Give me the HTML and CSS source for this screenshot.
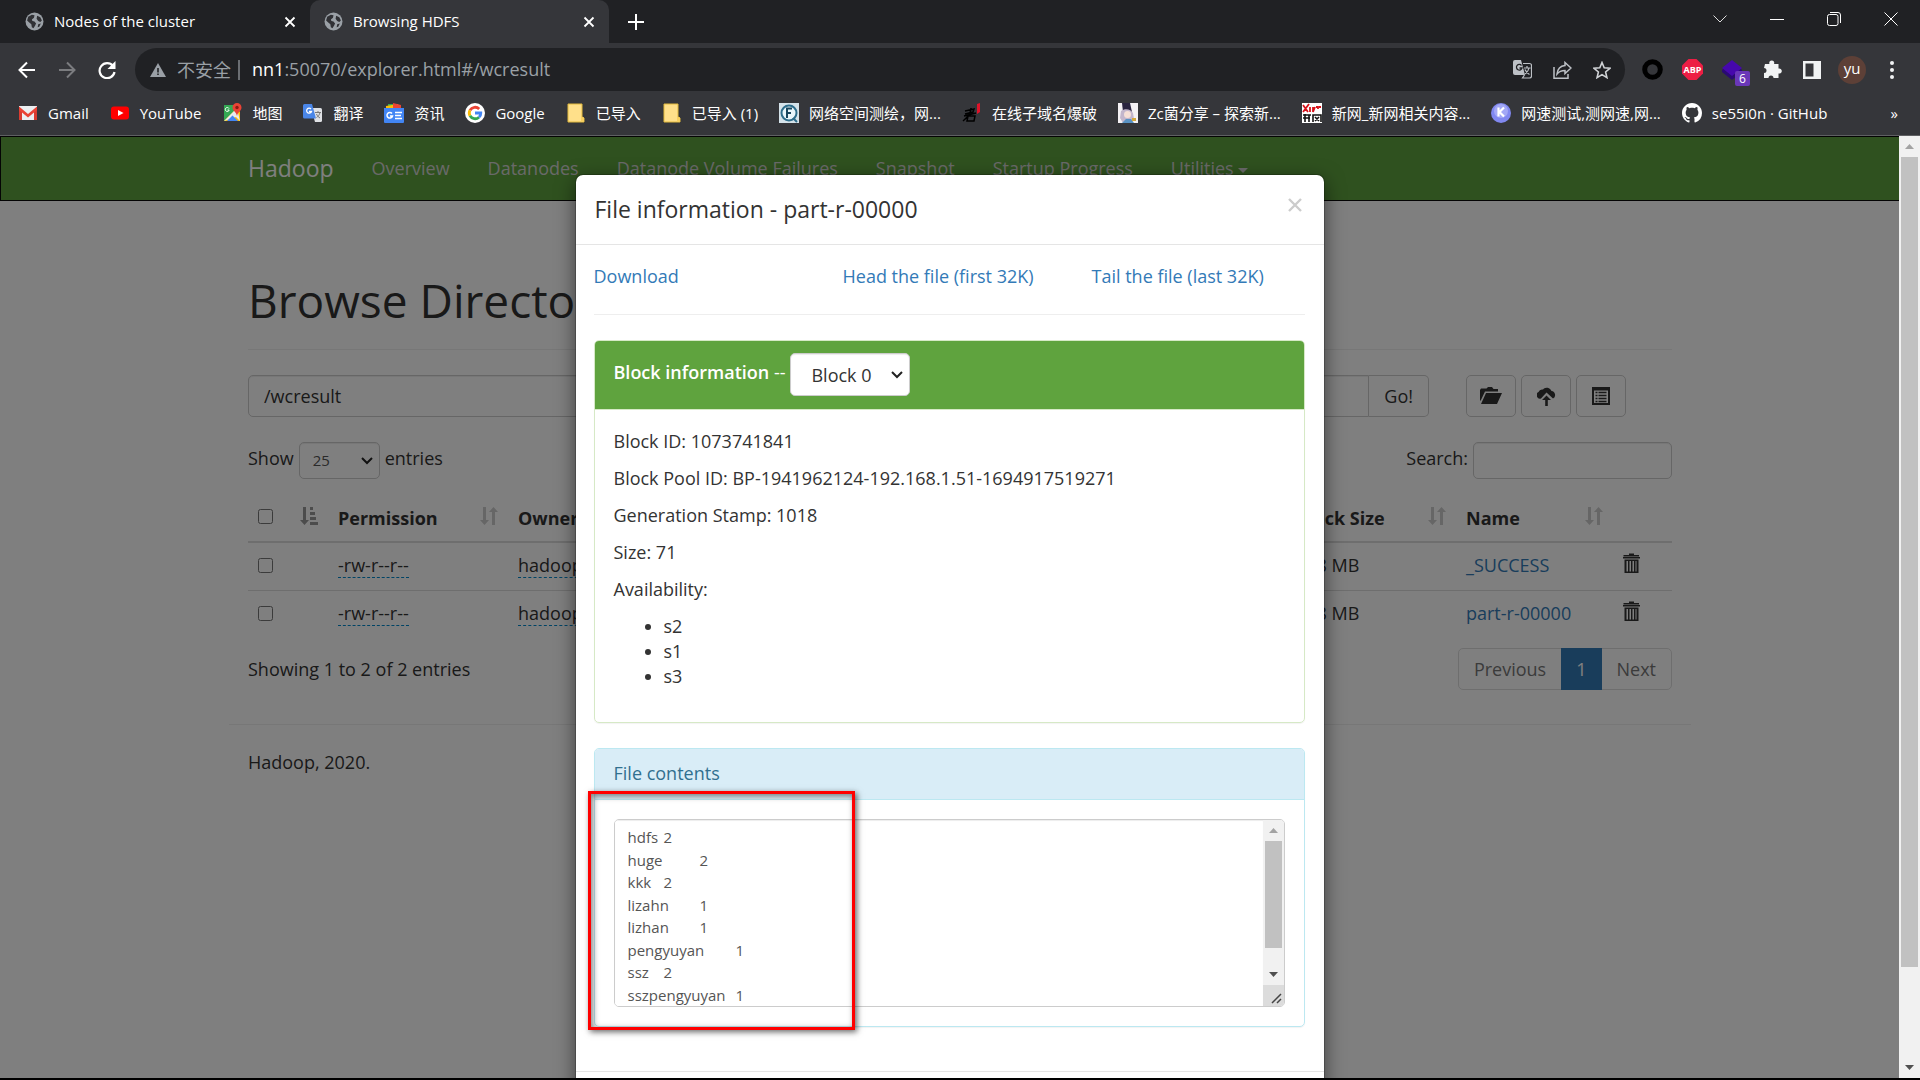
FILE: index.html
```html
<!DOCTYPE html>
<html lang="zh-CN">
<head>
    <meta charset="utf-8">
    <title>Browsing HDFS</title>
    <link rel="stylesheet" href="styles.css">
</head>
<body>
    <!-- shared icons -->
    <svg class="defs" aria-hidden="true">
        <symbol id="globe" viewBox="0 0 18 18">
            <circle cx="9" cy="9" r="8.5" fill="#9aa0a6"/>
            <path d="M3 4.500l3.500-2 2.500.5-.5 2.500-2 1.500.5 1.500 2 .5 1.500 2-1 2-1.500 2.500-1.500-1-.5-3-2.500-2-1.500-1.500zM11.500 3.500l3 1.500 1.500 3-1.500 1.500-2-1-1.500-2zM12.500 11.500l2.500-.5-1.500 3-1.500.5z" fill="#303135"/>
        </symbol>
        <symbol id="close" viewBox="0 0 12 12">
            <path d="M1.500 1.500l9 9M10.500 1.500l-9 9" stroke="currentColor" stroke-width="1.800"/>
        </symbol>
        <symbol id="folder" viewBox="0 0 20 20">
            <path d="M2 1h14v13l2 1v4H2z" fill="#ffe08a" stroke="#e2b93d"/>
            <path d="M15 14v4.500h3V14.500z" fill="#f7cf5e"/>
        </symbol>
        <symbol id="sort" viewBox="0 0 18 19">
            <path d="M3 0h3v13h3l-4.500 5L0 13h3zM12 18h3V5h3L13.500 0 9 5h3z" fill="currentColor"/>
        </symbol>
        <symbol id="sorted" viewBox="0 0 18 19">
            <path d="M3 0h3v13h3l-4.500 5L0 13h3zM10 0h3v3h-3zM10 5h5v3h-5zM10 10h6v3h-6zM10 15h8v3h-8z" fill="currentColor"/>
        </symbol>
        <symbol id="trash" viewBox="0 0 17 21">
            <path d="M6 2V.500h5V2h5v1.500H0.500V2zM0 4h17v1.500H0z" fill="currentColor"/>
            <path fill-rule="evenodd" d="M1.500 6.500h14V20h-14zM3.500 8v10.500h1.500V8zM6.500 8v10.500h1.500V8zM9.500 8v10.500h1.500V8zM12.500 8v10.500h1V8z" fill="currentColor"/>
        </symbol>
        <symbol id="arrow-up" viewBox="0 0 9 5"><path d="M0 5h9L4.500 0z" fill="#a3a3a3"/></symbol>
        <symbol id="arrow-down" viewBox="0 0 9 5"><path d="M0 0h9L4.500 5z" fill="#505050"/></symbol>
    </svg>

    <header class="browser">
        <div class="tabs">
            <div class="tab">
                <svg class="tab-icon"><use href="#globe"/></svg>
                <span class="tab-title">Nodes of the cluster</span>
                <button class="tab-close" aria-label="Close tab"><svg><use href="#close"/></svg></button>
            </div>
            <div class="tab active">
                <svg class="tab-icon"><use href="#globe"/></svg>
                <span class="tab-title">Browsing HDFS</span>
                <button class="tab-close" aria-label="Close tab"><svg><use href="#close"/></svg></button>
            </div>
            <button class="new-tab" aria-label="New tab"><svg width="16" height="16" viewBox="0 0 16 16"><path d="M8 0v16M0 8h16" stroke="#fff" stroke-width="2"/></svg></button>
            <div class="window-buttons">
                <button aria-label="Search tabs"><svg width="14" height="8" viewBox="0 0 14 8"><path d="M.500.500L7 7 13.500.500" fill="none" stroke="#ddd"/></svg></button>
                <button aria-label="Minimize"><svg width="14" height="1" viewBox="0 0 14 1"><path d="M0 0h14v1H0z" fill="#fff"/></svg></button>
                <button aria-label="Restore"><svg width="14" height="14" viewBox="0 0 14 14"><rect x=".5" y="2.500" width="10.500" height="11" rx="2" fill="none" stroke="#fff"/><path d="M3 .500h8a2.500 2.500 0 0 1 2.500 2.500v8" fill="none" stroke="#fff"/></svg></button>
                <button aria-label="Close"><svg width="14" height="14" viewBox="0 0 14 14"><path d="M.500.500l13 13M13.500.500l-13 13" stroke="#fff"/></svg></button>
            </div>
        </div>

        <div class="toolbar">
            <button class="tool" aria-label="Back"><svg width="18" height="18" viewBox="0 0 18 18"><path d="M17 9H2M9 1.500L1.500 9 9 16.500" fill="none" stroke="#fff" stroke-width="2"/></svg></button>
            <button class="tool" aria-label="Forward"><svg width="18" height="18" viewBox="0 0 18 18"><path d="M1 9h15M9 1.500L16.500 9 9 16.500" fill="none" stroke="#7b7c7f" stroke-width="2"/></svg></button>
            <button class="tool" aria-label="Reload"><svg width="18" height="18" viewBox="0 0 18 18"><path d="M15 5A7.500 7.500 0 1 0 16.500 11" fill="none" stroke="#fff" stroke-width="2.200"/><path d="M17.500 0v8h-8z" fill="#fff"/></svg></button>
            <div class="omnibox">
                <svg width="16" height="14" viewBox="0 0 16 14"><path d="M8 0l8 14H0z" fill="#9aa0a6"/><path d="M7.200 5h1.600v4.500H7.200zM7.200 10.500h1.600V12H7.200z" fill="#202124"/></svg>
                <span class="insecure">不安全</span>
                <span class="url"><b>nn1</b>:50070/explorer.html#/wcresult</span>
                <button class="tool" aria-label="Translate"><svg width="19" height="19" viewBox="0 0 19 19"><path d="M2 0h6l4 15H2a2 2 0 0 1-2-2V2a2 2 0 0 1 2-2z" fill="#bdc1c6"/><path d="M8.500 5.500A2.800 2.800 0 1 0 9 8H6.500" fill="none" stroke="#202124" stroke-width="1.300"/><path d="M10 3.500h6.500a2 2 0 0 1 2 2V16a2 2 0 0 1-2 2H9.500l2-3M11 8h6.500M14 6v2M16 8c-.5 3-2 4.500-4 6M12 9.500c1 2.500 2.500 4 4.500 5" fill="none" stroke="#bdc1c6" stroke-width="1.200"/></svg></button>
                <button class="tool" aria-label="Share"><svg width="19" height="18" viewBox="0 0 19 18"><path d="M1 6v11.200h14V13" fill="none" stroke="#bdc1c6" stroke-width="1.500"/><path d="M12 1.500L18 7l-6 5.500V9.500c-4 0-6 1-8 3.500.5-4.500 3-8 8-8.500z" fill="none" stroke="#bdc1c6" stroke-width="1.500"/></svg></button>
                <button class="tool" aria-label="Bookmark"><svg width="18" height="18" viewBox="0 0 18 18"><path d="M9 1.500l2.200 5.300 5.700.5-4.300 3.700 1.300 5.600L9 13.600l-4.900 3 1.300-5.600L1.100 7.300l5.700-.5z" fill="none" stroke="#d0d3d6" stroke-width="1.600"/></svg></button>
            </div>
            <button class="tool" aria-label="Extension"><svg width="21" height="21" viewBox="0 0 21 21"><circle cx="10.500" cy="10.500" r="7.800" fill="none" stroke="#000" stroke-width="5"/></svg></button>
            <button class="tool" aria-label="Adblock"><svg width="21" height="21" viewBox="0 0 21 21"><path d="M6.500 0h8L21 6.500v8L14.500 21h-8L0 14.500v-8z" fill="#ed1e45"/><text x="10.500" y="14.200" text-anchor="middle" class="abp">ABP</text></svg></button>
            <button class="tool ext" aria-label="Wappalyzer"><svg width="20" height="20" viewBox="0 0 20 20"><path d="M0 10l10-9 10 9v2l-10 8L0 12z" fill="#2a0a73"/><path d="M10 0l10 8-10 8L0 8z" fill="#4608ad"/></svg><span class="ext-count">6</span></button>
            <button class="tool" aria-label="Extensions"><svg width="19" height="19" viewBox="0 0 19 19"><path d="M2 4h4.500a2.500 2.500 0 1 1 4.500 0h4.500v4.500a2.600 2.600 0 1 1 0 5V18h-5a2.500 2.500 0 0 0-5 0H1v-5a2.500 2.500 0 0 0 0-5z" fill="#f1f3f4"/></svg></button>
            <button class="tool" aria-label="Side panel"><svg width="18" height="18" viewBox="0 0 18 18"><path fill-rule="evenodd" d="M0 0h18v18H0zM2.500 2.500v13h8v-13z" fill="#f1f3f4"/></svg></button>
            <button class="tool" aria-label="Profile"><span class="avatar">yu</span></button>
            <button class="tool" aria-label="Menu"><svg width="4" height="18" viewBox="0 0 4 18"><g fill="#f1f3f4"><circle cx="2" cy="2" r="2"/><circle cx="2" cy="9" r="2"/><circle cx="2" cy="16" r="2"/></g></svg></button>
        </div>

        <nav class="bookmarks">
            <a href="#"><svg viewBox="0 0 20 20"><path d="M1 3h18v14H1z" fill="#eceff1"/><path d="M1 17V4l3 2.500V17zM19 17V4l-3 2.500V17z" fill="#d93c31"/><path d="M1 3.500L10 11l9-7.500V7l-9 7.500L1 7z" fill="#ea4335"/></svg>Gmail</a>
            <a href="#"><svg viewBox="0 0 20 20"><rect x="1" y="3.500" width="18" height="13" rx="3" fill="#f00"/><path d="M8 7l5.500 3L8 13z" fill="#fff"/></svg>YouTube</a>
            <a href="#"><svg viewBox="0 0 20 20"><path d="M2 2h16v16H2z" fill="#34a853"/><path d="M2 18L14 6l4 3v9z" fill="#fbbc05"/><path d="M2 18L15 5l3 13-4-4z" fill="#e8eaed"/><path d="M5 18l5.500-5.500L16 18z" fill="#4285f4"/><path d="M15 0a4.500 4.500 0 0 1 4.500 4.500C19.500 8 15.500 9 15 13c-.5-4-4.500-5-4.500-8.500A4.500 4.500 0 0 1 15 0z" fill="#ea4335"/><circle cx="15" cy="4.500" r="1.700" fill="#8c1a12"/><path d="M7 5.500A2 2 0 1 0 7.200 7H5.500" fill="none" stroke="#fff"/></svg>地图</a>
            <a href="#"><svg viewBox="0 0 20 20"><path d="M8 5h9.500A1.500 1.500 0 0 1 19 6.500v11a1.500 1.500 0 0 1-1.500 1.500H12z" fill="#dfe1e5"/><path d="M1.500 1H9l4 14.500H1.500A1.500 1.500 0 0 1 0 14V2.500A1.500 1.500 0 0 1 1.500 1z" fill="#4a86e8"/><path d="M8 6a2.500 2.500 0 1 0 .5 2.500H6" fill="none" stroke="#fff" stroke-width="1.300"/><path d="M12 9.500h6M15 8v1.500M17 9.500c-.5 2.500-2 4-3.500 5M13.500 11c.8 2 2 3 3.500 4" fill="none" stroke="#777" /></svg>翻译</a>
            <a href="#"><svg viewBox="0 0 20 20"><path d="M4 1h10v6H4z" fill="#34a853"/><path d="M2 3l12-2 2 6H2z" fill="#fbbc05"/><path d="M9 0l8 2v5H9z" fill="#ea4335"/><path d="M0 5h20v14a1 1 0 0 1-1 1H1a1 1 0 0 1-1-1z" fill="#4285f4"/><path d="M8 10.500a2.800 2.800 0 1 0 .5 2.500H6M11 9.500h7M11 12.500h6M11 15.500h7" fill="none" stroke="#fff" stroke-width="1.500"/></svg>资讯</a>
            <a href="#"><svg viewBox="0 0 20 20"><circle cx="10" cy="10" r="10" fill="#fff"/><g fill="none" stroke-width="2.800"><path d="M14.200 6A5.800 5.800 0 0 0 5 7.200" stroke="#ea4335"/><path d="M5 7.200a5.800 5.800 0 0 0 0 5.600" stroke="#fbbc05"/><path d="M5 12.800a5.800 5.800 0 0 0 9 1.400" stroke="#34a853"/><path d="M14 14.200A5.500 5.500 0 0 0 15.800 10H10" stroke="#4285f4"/></g></svg>Google</a>
            <a href="#"><svg><use href="#folder"/></svg>已导入</a>
            <a href="#"><svg><use href="#folder"/></svg>已导入 (1)</a>
            <a href="#"><svg viewBox="0 0 20 20"><path d="M0 0h20v20H0z" fill="#d5e3ea"/><circle cx="10" cy="10" r="7.500" fill="#e8f6fb" stroke="#2d6d8b" stroke-width="2"/><path d="M8 15V5.500h5M8 10h4" fill="none" stroke="#17465e" stroke-width="2"/><path d="M14 15l4 4" stroke="#2d6d8b" stroke-width="2"/></svg>网络空间测绘，网...</a>
            <a href="#"><svg viewBox="0 0 20 20"><path d="M3 8l9-2-1 3-8 2M2 13l12-3M9 5c0 5-3 9-8 13M6 13h7l-1 5H5z" fill="none" stroke="#000" stroke-width="1.500"/><path d="M15 1l3-1v9l-3 2z" fill="#e0132a"/></svg>在线子域名爆破</a>
            <a href="#"><svg viewBox="0 0 20 20"><path d="M0 0h20v20H0z" fill="#f4f1f4"/><path d="M4 0h8l2 9H5z" fill="#2a2540"/><path d="M3 8c4-3 10-2 12 2l1 6-4 4H5l-3-5z" fill="#c3b6cc"/><circle cx="9.500" cy="11.500" r="3.500" fill="#f6dfd6"/><path d="M4 20l4-4h5l3 4z" fill="#5a93c4"/><path d="M14 15h4v3h-4z" fill="#d3a83d"/></svg>Zc菌分享 – 探索新...</a>
            <a href="#"><svg viewBox="0 0 20 20"><path d="M0 0h20v20H0z" fill="#fff"/><path d="M1 2l5 7M7 1L1 9M8 4v5M11 4v5l2-5M14 4h2v2M17 4h2" stroke="#d8131b" stroke-width="1.800" fill="none"/><path d="M1 12h8M3 11v8M1 15h7M7 12v7M11 19v-7h8v7M13 14l4 4M17 14l-4 4" stroke="#111" stroke-width="1.600" fill="none"/></svg>新网_新网相关内容...</a>
            <a href="#"><svg viewBox="0 0 20 20"><circle cx="10" cy="10" r="10" fill="#8188f0"/><circle cx="10" cy="8" r="7" fill="#a3a8f6"/><path d="M7.500 4.500v9M13 4.500L8.500 9l4.500 4.500" stroke="#fff" stroke-width="2.200" fill="none"/></svg>网速测试,测网速,网...</a>
            <a href="#"><svg viewBox="0 0 16 16"><path fill="#fff" d="M8 0C3.580 0 0 3.580 0 8c0 3.540 2.290 6.530 5.470 7.590.4.070.55-.17.55-.38 0-.19-.01-.82-.01-1.490-2.010.37-2.530-.49-2.690-.94-.09-.23-.48-.94-.82-1.130-.28-.15-.68-.52-.01-.53.63-.01 1.080.58 1.230.82.72 1.210 1.870.87 2.330.66.07-.52.28-.87.51-1.070-1.780-.2-3.640-.89-3.640-3.950 0-.87.31-1.590.82-2.150-.08-.2-.36-1.020.08-2.120 0 0 .67-.21 2.200.82.64-.18 1.320-.27 2-.27s1.360.09 2 .27c1.530-1.040 2.200-.82 2.200-.82.44 1.100.16 1.920.08 2.120.51.56.82 1.270.82 2.150 0 3.070-1.870 3.750-3.650 3.950.29.25.54.73.54 1.480 0 1.070-.01 1.930-.01 2.200 0 .21.15.46.55.38A8.010 8.010 0 0 0 16 8c0-4.420-3.580-8-8-8z"/></svg>se55i0n · GitHub</a>
            <button class="more" aria-label="More bookmarks">»</button>
        </nav>
    </header>

    <div class="viewport">
        <div class="page">
            <nav class="navbar">
                <div class="container">
                    <a class="brand" href="#">Hadoop</a>
                    <a href="#">Overview</a>
                    <a href="#">Datanodes</a>
                    <a href="#">Datanode Volume Failures</a>
                    <a href="#">Snapshot</a>
                    <a href="#">Startup Progress</a>
                    <a href="#">Utilities <span class="caret"></span></a>
                </div>
            </nav>

            <div class="container">
                <h1>Browse Directory</h1>

                <div class="path-row">
                    <div class="input-group">
                        <input class="form-control" type="text" value="/wcresult" aria-label="Directory">
                        <button class="btn">Go!</button>
                    </div>
                    <div class="actions">
                        <button class="btn" aria-label="Create directory"><svg width="24" height="18" viewBox="0 0 24 18"><path d="M1 13V3l1-1.500h5.500L9 0h4l1.500 2H19v2.500H6L1.500 14zM7 6h16l-5 11H2z" fill="currentColor"/></svg></button>
                        <button class="btn" aria-label="Upload files"><svg width="19" height="19" viewBox="0 0 19 19"><path d="M4 11.500A3.500 3.500 0 0 1 1.500 5 4 4 0 0 1 6 2.500a5 5 0 0 1 8.500 1.500 4 4 0 0 1 1.500 7.500L9.500 5.500z" fill="currentColor"/><path d="M9.500 8.500l4.500 4.500h-3.200V19H8.200v-6H5z" fill="currentColor"/></svg></button>
                        <button class="btn" aria-label="Cut and paste"><svg width="18" height="18" viewBox="0 0 18 18"><path fill-rule="evenodd" d="M0 0h18v18H0zM2 3.500V16h14V3.500z" fill="currentColor"/><path d="M3.500 5.500h2M3.500 8.500h2M3.500 11.500h2M3.500 14.500h2M6.500 5.500h8M6.500 8.500h8M6.500 11.500h8M6.500 14.500h8" stroke="currentColor" stroke-width="1.300"/></svg></button>
                    </div>
                </div>

                <div class="table-tools">
                    <label>Show <select class="form-control small"><option>25</option></select> entries</label>
                    <label>Search: <input class="form-control small" type="search"></label>
                </div>

                <table>
                    <colgroup><col class="c-check"><col class="c-perm"><col><col class="c-block"><col class="c-name"><col class="c-trash"></colgroup>
                    <thead>
                        <tr>
                            <th><div><input type="checkbox" aria-label="Select all"><svg class="sort on"><use href="#sorted"/></svg></div></th>
                            <th><div>Permission<svg class="sort"><use href="#sort"/></svg></div></th>
                            <th>Owner</th>
                            <th><div>Block Size<svg class="sort"><use href="#sort"/></svg></div></th>
                            <th><div>Name<svg class="sort"><use href="#sort"/></svg></div></th>
                            <th></th>
                        </tr>
                    </thead>
                    <tbody>
                        <tr>
                            <td><input type="checkbox" aria-label="_SUCCESS"></td>
                            <td><span class="editable">-rw-r--r--</span></td>
                            <td><span class="editable">hadoop</span></td>
                            <td>128 MB</td>
                            <td><a href="#">_SUCCESS</a></td>
                            <td><button class="trash" aria-label="Delete"><svg><use href="#trash"/></svg></button></td>
                        </tr>
                        <tr>
                            <td><input type="checkbox" aria-label="part-r-00000"></td>
                            <td><span class="editable">-rw-r--r--</span></td>
                            <td><span class="editable">hadoop</span></td>
                            <td>128 MB</td>
                            <td><a href="#">part-r-00000</a></td>
                            <td><button class="trash" aria-label="Delete"><svg><use href="#trash"/></svg></button></td>
                        </tr>
                    </tbody>
                </table>

                <div class="table-foot">
                    <span>Showing 1 to 2 of 2 entries</span>
                    <div class="pagination">
                        <a href="#">Previous</a><a class="current" href="#">1</a><a href="#">Next</a>
                    </div>
                </div>

                <footer><p>Hadoop, 2020.</p></footer>
            </div>
        </div>

        <div class="modal-wrap">
            <div class="modal-scroll">
                <div class="modal" role="dialog" aria-labelledby="modal-title">
                    <div class="modal-header">
                        <h4 id="modal-title">File information - part-r-00000</h4>
                        <button class="modal-close" aria-label="Close"><svg width="16" height="16"><use href="#close"/></svg></button>
                    </div>
                    <div class="modal-body">
                        <div class="links">
                            <a href="#">Download</a>
                            <a href="#">Head the file (first 32K)</a>
                            <a href="#">Tail the file (last 32K)</a>
                        </div>
                        <hr>
                        <div class="panel success">
                            <div class="panel-heading">
                                <label for="block"><b>Block information</b> --</label>
                                <select id="block" class="form-control"><option>Block 0</option></select>
                            </div>
                            <div class="panel-body">
                                <p>Block ID: 1073741841</p>
                                <p>Block Pool ID: BP-1941962124-192.168.1.51-1694917519271</p>
                                <p>Generation Stamp: 1018</p>
                                <p>Size: 71</p>
                                <p>Availability:</p>
                                <ul>
                                    <li>s2</li>
                                    <li>s1</li>
                                    <li>s3</li>
                                </ul>
                            </div>
                        </div>
                        <div class="panel info">
                            <div class="panel-heading"><label for="contents">File contents</label></div>
                            <div class="panel-body">
                                <div class="preview">
                                    <textarea id="contents">hdfs&#9;2
huge&#9;2
kkk&#9;2
lizahn&#9;1
lizhan&#9;1
pengyuyan&#9;1
ssz&#9;2
sszpengyuyan&#9;1
</textarea>
                                    <div class="scrollbar">
                                        <svg><use href="#arrow-up"/></svg>
                                        <div class="track"><div class="thumb"></div></div>
                                        <svg><use href="#arrow-down"/></svg>
                                        <div class="resizer"><svg width="11" height="11" viewBox="0 0 11 11"><path d="M1 10l9-9M6 10l4-4" stroke="#444" stroke-width="1.500"/></svg></div>
                                    </div>
                                </div>
                            </div>
                            <div class="marker"></div>
                        </div>
                    </div>
                    <div class="modal-footer"></div>
                </div>
            </div>
            <div class="scrollbar">
                <svg><use href="#arrow-up"/></svg>
                <div class="track"><div class="thumb"></div></div>
                <svg><use href="#arrow-down"/></svg>
            </div>
        </div>
    </div>
</body>
</html>
```
FILE: styles.css
```css
* {
    box-sizing: border-box;
}
body {
    margin: 0;
    height: 100vh;
    display: flex;
    flex-direction: column;
    border-bottom: 2px solid #000;
    font-family: "Open Sans", "Noto Sans CJK SC", sans-serif;
    font-size: 18px;
    line-height: 25px;
    color: #333;
    overflow: hidden;
}
button, input, select, textarea {
    font: inherit;
    color: inherit;
}
button {
    border: 0;
    padding: 0;
    background: none;
}
a {
    color: #337ab7;
    text-decoration: none;
}
.defs {
    position: absolute;
    width: 0;
    height: 0;
}

/* browser chrome */
.browser {
    background: #35363a;
    border-bottom: 1px solid #5f6063;
    color: #fff;
    font-size: 15px;
}
.tabs {
    display: flex;
    height: 43px;
    background: #202124;
}
.tab {
    display: flex;
    align-items: center;
    width: 299px;
    padding: 0 14px;
    gap: 10px;
}
.tab:first-child {
    width: 310px;
    padding-left: 25px;
}
.tab.active {
    background: #35363a;
    border-radius: 10px 10px 0 0;
}
.tab-icon {
    width: 19px;
    height: 19px;
}
.tab-title {
    flex: 1;
}
.tab-close {
    width: 12px;
    height: 12px;
    display: flex;
}
.new-tab {
    width: 54px;
    display: flex;
    align-items: center;
    justify-content: center;
}
.window-buttons {
    display: flex;
    margin-left: auto;
    padding-right: 1px;
}
.window-buttons button {
    width: 57px;
    height: 38px;
    display: flex;
    align-items: center;
    justify-content: center;
}
.toolbar {
    display: flex;
    padding: 5px 8px 0 7px;
}
.tool {
    width: 40px;
    height: 43px;
    display: flex;
    align-items: center;
    justify-content: center;
}
.omnibox {
    flex: 1;
    display: flex;
    align-items: center;
    margin: 0 7px 0 8px;
    padding: 0 3px 0 15px;
    border-radius: 22px;
    background: #202124;
    font-size: 18px;
    color: #9aa0a6;
}
.insecure {
    line-height: 20px;
    margin-left: 11px;
    padding-right: 7px;
    border-right: 2px solid #6b6e73;
}
.url {
    flex: 1;
    margin-left: 12px;
}
.url b {
    color: #fff;
    font-weight: normal;
}
.abp {
    font-size: 9px;
    font-weight: bold;
    fill: #fff;
}
.ext {
    position: relative;
}
.ext-count {
    position: absolute;
    left: 23px;
    top: 23px;
    width: 15px;
    height: 15px;
    border-radius: 2px;
    background: #6a37b8;
    font-size: 12px;
    line-height: 15px;
    color: #fff;
}
.avatar {
    width: 28px;
    height: 28px;
    border-radius: 50%;
    background: #5d4037;
    line-height: 25px;
    color: #fff;
}
.bookmarks {
    display: flex;
    align-items: center;
    gap: 21px;
    height: 44px;
    padding: 0 22px 0 18px;
    white-space: nowrap;
}
.bookmarks a {
    display: flex;
    align-items: center;
    gap: 10px;
    color: #fff;
}
.bookmarks a svg {
    width: 20px;
    height: 20px;
}
.more {
    margin-left: auto;
    color: #fff;
}

/* hadoop page */
.viewport {
    position: relative;
    flex: 1;
    overflow: hidden;
}
.container {
    max-width: 1462px;
    margin: 0 auto;
    padding: 0 19px;
}
.navbar {
    background: #5fa33e;
    border: 1px solid #080808;
}
.navbar .container {
    display: flex;
    gap: 38px;
    line-height: 63px;
}
.navbar a {
    color: #d3d3d3;
}
.navbar .brand {
    color: #fff;
    font-size: 23px;
}
.caret {
    display: inline-block;
    border: 5px solid transparent;
    border-top-color: #d3d3d3;
    border-bottom: 0;
    vertical-align: middle;
}
h1 {
    margin: 72px 0 25px;
    padding-bottom: 22px;
    border-bottom: 1px solid #eee;
    font-size: 46px;
    line-height: 54px;
    font-weight: normal;
}
.form-control {
    height: 42px;
    padding: 0 15px;
    border: 1px solid #ccc;
    border-radius: 5px;
    background: #fff;
    box-shadow: inset 0 1px 1px rgba(0, 0, 0, .075);
    outline: 0;
}
.form-control.small {
    height: 37px;
    padding: 0 13px;
    font-size: 15px;
    color: #555;
}
select.form-control {
    appearance: none;
    background: #fff url("data:image/svg+xml,%3Csvg xmlns='http://www.w3.org/2000/svg' width='12' height='8'%3E%3Cpath d='M1 1l5 5 5-5' fill='none' stroke='%23222' stroke-width='2'/%3E%3C/svg%3E") no-repeat right 6px center;
}
.path-row {
    display: flex;
    gap: 37px;
}
.input-group {
    flex: 1;
    display: flex;
}
.input-group input {
    flex: 1;
    border-radius: 5px 0 0 5px;
}
.btn {
    height: 42px;
    padding: 0 15px;
    border: 1px solid #ccc;
    border-radius: 5px;
}
.input-group .btn {
    border-left: 0;
    border-radius: 0 5px 5px 0;
}
.actions {
    display: flex;
    gap: 5px;
    width: 206px;
}
.actions .btn {
    width: 50px;
    display: flex;
    align-items: center;
    justify-content: center;
    padding: 0;
}
.table-tools {
    display: flex;
    justify-content: space-between;
    margin: 25px 0 17px;
}
.table-tools label {
    display: flex;
    gap: 5px;
    line-height: 33px;
}
.table-tools select {
    width: 81px;
    padding-left: 17px;
}
.table-tools input {
    width: 199px;
}
table {
    width: 100%;
    table-layout: fixed;
    border-collapse: collapse;
}
.c-check {
    width: 80px;
}
.c-perm {
    width: 180px;
}
.c-block {
    width: 170px;
}
.c-name {
    width: 157px;
}
.c-trash {
    width: 59px;
}
th, td {
    padding: 10px;
    text-align: left;
}
th {
    border-bottom: 2px solid #ddd;
}
th div {
    display: flex;
    align-items: center;
    justify-content: space-between;
    height: 25px;
}
td {
    padding-bottom: 12px;
}
tbody tr + tr {
    border-top: 1px solid #ddd;
}
.sort {
    width: 18px;
    height: 19px;
    margin-bottom: 4px;
    color: #ccc;
}
.sort.on {
    color: #999;
}
input[type=checkbox] {
    width: 15px;
    height: 15px;
    margin: 0 0 4px;
    vertical-align: middle;
}
.editable {
    border-bottom: 1px dashed #08c;
}
.trash {
    display: block;
    margin-bottom: 4px;
}
.trash svg {
    display: block;
    width: 17px;
    height: 21px;
}
.table-foot {
    display: flex;
    justify-content: space-between;
    align-items: center;
    margin-top: 10px;
}
.pagination {
    display: flex;
    border: 1px solid #ddd;
    border-radius: 5px;
    line-height: 40px;
}
.pagination a {
    padding: 0 15px;
    color: #777;
}
.pagination .current {
    margin: -1px 0;
    line-height: 42px;
    background: #337ab7;
    color: #fff;
}
footer {
    margin: 34px -19px 0;
    padding: 25px 19px;
    border-top: 1px solid #eee;
}
footer p {
    margin: 0;
}

/* file info dialog */
.modal-wrap {
    position: absolute;
    inset: 0;
    display: flex;
    background: rgba(0, 0, 0, .5);
}
.modal-scroll {
    flex: 1;
    overflow-y: auto;
    scrollbar-width: none;
}
.modal {
    width: 750px;
    margin: 38px auto;
    border: 1px solid rgba(0, 0, 0, .2);
    border-radius: 8px;
    background: #fff;
    background-clip: padding-box;
    box-shadow: 0 6px 19px rgba(0, 0, 0, .5);
}
.modal-header {
    display: flex;
    justify-content: space-between;
    padding: 18px 21px 18px 19px;
    border-bottom: 1px solid #e5e5e5;
}
h4 {
    margin: 0;
    font-size: 23px;
    line-height: 33px;
    font-weight: normal;
}
.modal-close {
    height: 26px;
    color: #ccc;
}
.modal-body {
    padding: 19px 19px 19px 18px;
}
.links {
    display: grid;
    grid-template-columns: repeat(3, 1fr);
    margin-right: -36px;
}
hr {
    margin: 25px 0;
    border: 0;
    border-top: 1px solid #eee;
}
.panel {
    position: relative;
    margin-bottom: 25px;
    border: 1px solid #d6e9c6;
    border-radius: 5px;
    box-shadow: 0 1px 1px rgba(0, 0, 0, .05);
}
.panel-heading {
    padding: 12px 19px 13px;
    border-bottom: 1px solid #d6e9c6;
    border-radius: 4px 4px 0 0;
}
.panel-body {
    padding: 19px;
}
.success .panel-heading {
    display: flex;
    gap: 5px;
    background: #5fa33e;
    line-height: 38px;
    color: #fff;
}
.success b {
    font-weight: 600;
}
.success select {
    width: 120px;
    height: 43px;
    padding-left: 20px;
    color: #333;
}
.panel p {
    margin: 0 0 12px;
}
.panel ul {
    margin: 0 0 14px;
    padding-left: 50px;
}
.info, .info .panel-heading {
    border-color: #bce8f1;
}
.info .panel-heading {
    background: #d9edf7;
    color: #31708f;
}
.preview {
    display: flex;
    height: 188px;
    border: 1px solid #ccc;
    border-radius: 5px;
    overflow: hidden;
}
textarea {
    flex: 1;
    padding: 6px 13px;
    border: 0;
    outline: 0;
    box-shadow: inset 0 1px 1px rgba(0, 0, 0, .075);
    font-size: 15px;
    line-height: 1.5;
    tab-size: 36px;
    color: #555;
    resize: none;
    scrollbar-width: none;
}
.marker {
    position: absolute;
    left: -7px;
    top: 42px;
    width: 267px;
    height: 239px;
    border: 3px solid #f00;
    box-shadow: 2px 2px 6px rgba(0, 0, 0, .6), inset 2px 2px 6px rgba(0, 0, 0, .5);
    pointer-events: none;
}
.modal-footer {
    height: 70px;
    border-top: 1px solid #e5e5e5;
}

/* classic scrollbars */
.scrollbar {
    display: flex;
    flex-direction: column;
    width: 21px;
    background: #f1f1f1;
}
.scrollbar > svg {
    width: 9px;
    height: 5px;
    margin: 8px 6px;
}
.track {
    flex: 1;
    padding: 0 2px;
}
.thumb {
    height: 90%;
    background: #c1c1c1;
}
.preview .thumb {
    height: 87%;
}
.resizer {
    display: flex;
    align-items: flex-end;
    justify-content: flex-end;
    height: 21px;
    padding: 2px;
    background: #dcdcdc;
}
```
